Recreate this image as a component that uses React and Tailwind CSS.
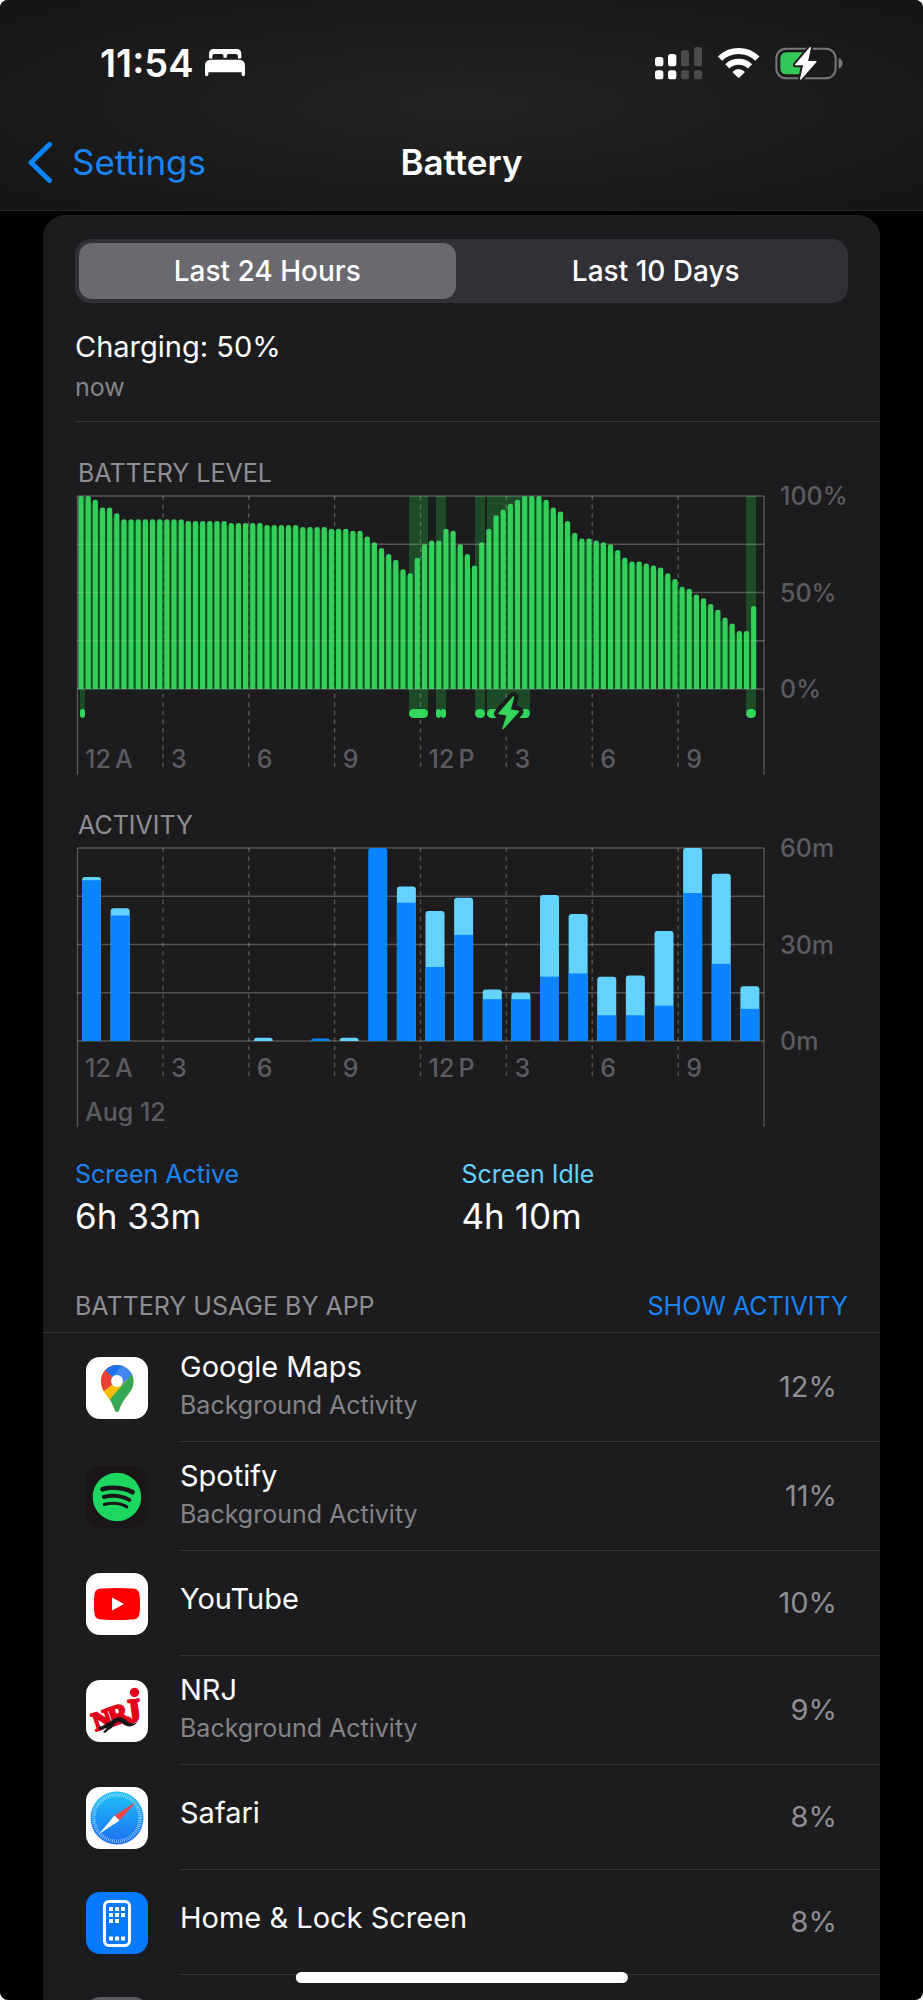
import { useState } from 'react'
import { FaSpotify } from 'react-icons/fa'

const BATTERY = [
  100, 100, 98, 94, 94, 91, 88, 88, 88, 88, 88, 88, 88, 88, 88, 87, 87, 87, 87, 87, 87, 86, 86, 86, 86, 86,
  85, 85, 85, 85, 85, 84, 84, 84, 84, 83, 83, 83, 82, 82, 79, 76, 73, 70, 67, 62, 60, 68, 75, 77, 77, 83,
  82, 75, 70, 64, 76, 83, 90, 93, 96, 98, 100, 100, 100, 98, 94, 92, 87, 81, 78, 78, 77, 76, 75, 72, 68,
  66, 66, 65, 64, 63, 60, 57, 53, 52, 49, 47, 44, 41, 37, 34, 30, 30, 43,
]

// charging periods, in chart units from the left edge: [x, width]
const CHARGING = [[5, 5], [334, 19], [361, 5], [366, 5], [400, 10], [412, 43], [671, 10]]

// minutes per hour: [active, total]
const ACTIVITY = [
  [50, 51], [39, 41.3], [0, 0], [0, 0], [0, 0], [0, 0], [0, 1], [0, 0], [0.8, 0.8], [0, 1], [60, 60], [43, 48],
  [23, 40.4], [33, 44.5], [13, 16], [13, 15], [20, 45.4], [21, 39.5], [8, 20], [8, 20.4], [11, 34.2],
  [46, 60], [24, 52], [10, 17],
]

const HOURS = ['12\u2009A', '3', '6', '9', '12\u2009P', '3', '6', '9']
const PLOT_X = 2
const PLOT_W = 687
const PLOT_H = 193
const TOP = 12
const BOTTOM = TOP + PLOT_H
const STEP = PLOT_W / 8

function GridLines({ dashEnd, solidEnd, opacity }) {
  return (
    <g stroke="#fff" strokeOpacity={opacity} strokeWidth="1.4">
      {[0, 1, 2, 3, 4].map(i => (
        <line key={i} x1={PLOT_X} x2={PLOT_X + PLOT_W} y1={TOP + (PLOT_H / 4) * i} y2={TOP + (PLOT_H / 4) * i}/>
      ))}
      <line x1={PLOT_X + .5} x2={PLOT_X + .5} y1={TOP} y2={solidEnd}/>
      <line x1={PLOT_X + PLOT_W} x2={PLOT_X + PLOT_W} y1={TOP} y2={solidEnd}/>
      {[1, 2, 3, 4, 5, 6, 7].map(i => (
        <line key={i} x1={PLOT_X + STEP * i} x2={PLOT_X + STEP * i} y1={TOP} y2={dashEnd} strokeDasharray="4.3 4.3"/>
      ))}
    </g>
  )
}

function AxisLabels({ labels, hourY }) {
  return (
    <g fill="#5b5b60" fontSize="25" fontWeight="500">
      {HOURS.map((h, i) => <text key={i} x={PLOT_X + STEP * i + 8} y={hourY}>{h}</text>)}
      {labels.map((l, i) => <text key={l} x="705" y={TOP + (PLOT_H / 2) * i + 9}>{l}</text>)}
    </g>
  )
}

function BatteryChart() {
  return (
    <svg viewBox="0 -8 805 300" className="-mt-3 block w-full" role="img" aria-label="Battery level">
      <GridLines dashEnd={287} solidEnd={291} opacity=".16"/>
      {CHARGING.map(([x, w]) => (
        <g key={x}>
          <rect x={x} y={TOP} width={w} height={PLOT_H + 24} fill="#24d14b" fillOpacity=".26"/>
          <rect x={x} y={BOTTOM + 20} width={w} height="9" rx={w > 5 ? 4.5 : 2.4} fill="#32d65b"/>
        </g>
      ))}
      {BATTERY.map((v, i) => {
        const x = 3.4 + i * 7.156
        const y = BOTTOM - (v / 100) * PLOT_H
        const gap = (Math.min(v, BATTERY[i + 1] ?? 0) / 100) * PLOT_H - 3
        return (
          <g key={i}>
            {gap > 0 && <rect x={x + 2} y={BOTTOM - gap} width="7" height={gap} fill="#0b4a1b"/>}
            <path d={`M${x} ${BOTTOM}V${y + 2.4}a2.6 2.4 0 0 1 5.2 0V${BOTTOM}z`} fill="#34ce5b"/>
          </g>
        )
      })}
      <GridLines dashEnd={287} solidEnd={291} opacity=".11"/>
      <AxisLabels labels={['100%', '50%', '0%']} hourY={284}/>
      <path d="M438.5 213l-14.5 16.500 8.500 1.500-4.500 13.500 15.500-17-8.500-1.500z" fill="#34ce5b" stroke="#1c1c1e" strokeWidth="10" strokeLinejoin="round"/>
      <path d="M438.5 213l-14.5 16.500 8.500 1.500-4.500 13.500 15.500-17-8.500-1.500z" fill="#32d65b" stroke="#32d65b" strokeWidth="1.500" strokeLinejoin="round"/>
    </svg>
  )
}

function ActivityChart() {
  const unit = PLOT_H / 60
  return (
    <svg viewBox="0 -8 805 300" className="-mt-3 block w-full" role="img" aria-label="Activity">
      <GridLines dashEnd={244} solidEnd={291} opacity=".24"/>
      <AxisLabels labels={['60m', '30m', '0m']} hourY={241}/>
      <text x={PLOT_X + 8} y="285" fill="#5b5b60" fontSize="25" fontWeight="500">Aug 12</text>
      {ACTIVITY.map(([active, total], i) => {
        if (!total) return null
        const x = 7 + i * (PLOT_W / 24)
        const h = total * unit
        const r = Math.min(3, h)
        return (
          <g key={i}>
            <path d={`M${x} ${BOTTOM}v${r - h}q0 ${-r} 3 ${-r}h13q3 0 3 ${r}V${BOTTOM}z`} fill={active === total ? '#0a84ff' : '#64d2ff'}/>
            {active > 0 && active < total && <rect x={x} y={BOTTOM - active * unit} width="19" height={active * unit} fill="#0a84ff"/>}
          </g>
        )
      })}
    </svg>
  )
}

function StatusIcons() {
  return (
    <svg viewBox="582 134 564 104" className="w-[188px]" role="img" aria-label="Signal, Wi-Fi, battery charging">
      <g fill="#fff">
        <rect x="582" y="167" width="25" height="28" rx="8"/>
        <rect x="621" y="158" width="25" height="37" rx="8"/>
        <rect x="582" y="207" width="25" height="27" rx="8"/>
        <rect x="621" y="207" width="25" height="27" rx="8"/>
      </g>
      <g fill="#4b4b4d">
        <rect x="660" y="147" width="24" height="48" rx="8"/>
        <rect x="699" y="137" width="24" height="58" rx="8"/>
        <rect x="660" y="207" width="24" height="27" rx="8"/>
        <rect x="699" y="207" width="24" height="27" rx="8"/>
      </g>
      <g fill="none" stroke="#fff" strokeWidth="18">
        <path d="M777 172a80 80 0 0 1 112 0"/>
        <path d="M799 195a49 49 0 0 1 68 0"/>
      </g>
      <path d="M814 212q19-18 38 0l-16 16q-3 3-6 0z" fill="#fff"/>
      <rect x="946" y="142" width="178" height="89" rx="29" fill="none" stroke="#77777a" strokeWidth="6"/>
      <path d="M1133 170q12 4 12 16t-12 16z" fill="#77777a"/>
      <path d="M978 153h54v66h-54q-20 0-20-20v-26q0-20 20-20z" fill="#34c759"/>
      <path d="M1048 139l-44 51h25l-10 43 46-52h-26z" fill="#fff" stroke="#1e1e1f" strokeWidth="16" strokeLinejoin="round"/>
      <path d="M1048 139l-44 51h25l-10 43 46-52h-26z" fill="#fff" stroke="#fff" strokeWidth="4" strokeLinejoin="round"/>
    </svg>
  )
}

function BedIcon() {
  return (
    <svg viewBox="615 150 119 81" className="w-10" fill="#fff" aria-hidden="true">
      <path d="M627 178v-14q0-14 14-14h68q14 0 14 14v14h-10v-7q0-6-6-6h-22q-5 0-5 5v6h-10v-6q0-5-5-5h-22q-6 0-6 6v7z"/>
      <path d="M615 226v-26q0-18 18-18h83q18 0 18 18v26q0 5-5 5t-5-5v-7h-99v7q0 5-5 5t-5-5z"/>
    </svg>
  )
}

function MapsIcon() {
  return (
    <svg viewBox="0 0 62 62" className="size-full bg-white" aria-hidden="true">
      <clipPath id="pin"><path d="M31 8c9 0 16.500 7 16.500 16 0 12-9.500 14-14.500 29.500q-2 3-4 0C24 38 15 36 15 24 15 15 22 8 31 8z"/></clipPath>
      <g clipPath="url(#pin)">
        <rect width="62" height="62" fill="#fbbc04"/>
        <path d="M48 12L24 42l6 20h32V12z" fill="#34a853"/>
        <path d="M0 0h31v24L14 37 0 50z" fill="#ea4335"/>
        <path d="M31 24L17 37l7 5 18-20z" fill="#fbbc04"/>
        <path d="M18 12l13 12L42 0H20z" fill="#1a73e8"/>
        <path d="M39 5L26 20l5 4 4 5 13-14z" fill="#4285f4"/>
      </g>
      <circle cx="31" cy="24" r="6" fill="#fff"/>
    </svg>
  )
}

function YouTubeIcon() {
  return (
    <svg viewBox="0 0 62 62" className="size-full bg-white" aria-hidden="true">
      <path d="M8 31c0-13 1-15 8-15.500q15-1 30 0c7 .5 8 2.500 8 15.500s-1 15-8 15.500q-15 1-30 0C9 46 8 44 8 31z" fill="#f00"/>
      <path d="M26 24.500v13L38 31z" fill="#fff"/>
    </svg>
  )
}

function NrjIcon() {
  return (
    <svg viewBox="0 0 62 62" className="size-full bg-white" aria-hidden="true">
      <g fill="#e2001a" stroke="#e2001a" strokeWidth="2.400" fontFamily="Liberation Serif, serif" fontWeight="700">
        <text x="10" y="51" fontSize="26" transform="rotate(-19 10 51)">N</text>
        <text x="26" y="46" fontSize="27" transform="rotate(-19 26 46)">R</text>
        <text x="40" y="43" fontSize="33" transform="rotate(-8 40 43)">J</text>
      </g>
      <circle cx="48.500" cy="12.500" r="5.500" fill="#e2001a" stroke="#fff" strokeWidth="1.500"/>
      <path d="M13 47c5-1 7-4 11-5 5-6 12-6 16-2 4 4 8 5 12 1-3 6-10 7-15 3-4-4-7-2-9 1-1 3-5 4-9 8l-2-1 4-4-8 2z" fill="#151515"/>
    </svg>
  )
}

function SafariIcon() {
  return (
    <svg viewBox="0 0 62 62" className="size-full bg-white" aria-hidden="true">
      <linearGradient id="safari" x2="0" y2="1">
        <stop stopColor="#1fc3f8"/>
        <stop offset="1" stopColor="#1b6df0"/>
      </linearGradient>
      <circle cx="31" cy="31" r="26.500" fill="url(#safari)"/>
      <circle cx="31" cy="31" r="23.200" fill="none" stroke="#fff" strokeOpacity=".65" strokeWidth="3.600" strokeDasharray=".7 1.324"/>
      <path d="M50 15L28.500 28.500l5 5z" fill="#f0424a"/>
      <path d="M13 47l15.500-18.500 5 5z" fill="#fff"/>
    </svg>
  )
}

function HomeIcon() {
  const dots = [[23, 15], [29, 15], [35, 15], [23, 21], [29, 21], [35, 21], [23, 27], [29, 27], [23, 44.500], [29, 44.500], [35, 44.500]]
  return (
    <svg viewBox="0 0 62 62" className="size-full bg-[#067aff]" fill="#fff" aria-hidden="true">
      <rect x="18.500" y="9.500" width="25" height="44" rx="4.500" fill="none" stroke="#fff" strokeWidth="3"/>
      {dots.map(([x, y]) => <rect key={`${x}-${y}`} x={x} y={y} width="4" height="4" rx=".6"/>)}
    </svg>
  )
}

function SpotifyIcon() {
  return (
    <div className="size-full bg-[#1a1516] flex items-center justify-center">
      <FaSpotify className="size-[50px] text-[#1ed760]"/>
    </div>
  )
}

const APPS = [
  { name: 'Google Maps', icon: MapsIcon, usage: '12%', background: true },
  { name: 'Spotify', icon: SpotifyIcon, usage: '11%', background: true },
  { name: 'YouTube', icon: YouTubeIcon, usage: '10%' },
  { name: 'NRJ', icon: NrjIcon, usage: '9%', background: true },
  { name: 'Safari', icon: SafariIcon, usage: '8%' },
  { name: 'Home & Lock Screen', icon: HomeIcon, usage: '8%' },
]

function AppRow({ app }) {
  const Icon = app.icon
  return (
    <li className="flex pl-[43px]">
      <div className="size-[62px] self-center rounded-[14px] overflow-hidden shrink-0"><Icon/></div>
      <div className={`ml-8 flex-1 flex items-center justify-between border-b border-[#343437] pr-[43px] ${app.background ? 'h-[109px]' : 'h-[105px]'}`}>
        <div className={app.background ? 'pb-px' : 'pb-2'}>
          <div className="text-[29px] leading-9">{app.name}</div>
          {app.background && <div className="text-[25px] leading-10 text-[#838388]">Background Activity</div>}
        </div>
        <div className="text-[29px] leading-9 text-[#8e8e93]">{app.usage}</div>
      </div>
    </li>
  )
}

export default function App() {
  const [range, setRange] = useState('Last 24 Hours')

  return (
    <div className="bg-white">
      <div className="relative h-screen overflow-hidden flex flex-col bg-black text-white rounded-lg font-[Inter,sans-serif]">
        <header className="shrink-0 h-[211px] border-b border-[#232325] bg-[radial-gradient(ellipse_at_center,#242426_0%,#1c1c1d_50%,#151515_100%)]">
          <div className="flex items-center justify-between pl-[100px] pr-20 pt-[38px]">
            <div className="flex items-center gap-3">
              <span className="text-[38px] leading-[50px] font-semibold">11:54</span>
              <BedIcon/>
            </div>
            <StatusIcons/>
          </div>
          <div className="grid grid-cols-3 items-center pt-[49px] px-7">
            <a href="#settings" className="flex items-center gap-5 text-[35px] leading-[50px] text-[#1b84f5]">
              <svg viewBox="0 0 24 41" className="w-6" fill="none" stroke="#0a84ff" strokeWidth="5" strokeLinecap="round" strokeLinejoin="round" aria-hidden="true">
                <path d="M21.500 2.500L3 20.500l18.500 18"/>
              </svg>
              Settings
            </a>
            <h1 className="text-center text-[35px] leading-[50px] font-semibold">Battery</h1>
          </div>
        </header>

        <main className="flex-1 min-h-0 overflow-y-auto [scrollbar-width:none] px-[43px] pt-1">
          <div className="bg-[#1c1c1e] rounded-t-[22px] pt-6">
            <div className="mx-8 flex gap-3 rounded-[16px] bg-[#313037] p-1">
              {['Last 24 Hours', 'Last 10 Days'].map(r => (
                <button key={r} type="button" aria-pressed={range === r} onClick={() => setRange(r)}
                  className={`flex-1 h-14 rounded-[13px] text-[28px] font-medium ${range === r ? 'bg-[#6a696f]' : ''}`}>
                  {r}
                </button>
              ))}
            </div>

            <section className="ml-8 border-b border-[#39393c] pt-6 pb-[14px]">
              <p className="text-[29px] leading-10">Charging: 50%</p>
              <p className="text-[25px] leading-10 text-[#838388]">now</p>
            </section>

            <section className="pl-8 pt-9">
              <h2 className="pl-[3px] text-[25px] leading-[30px] text-[#8e8e93]">BATTERY LEVEL</h2>
              <BatteryChart/>
            </section>

            <section className="pl-8 pt-[34px]">
              <h2 className="pl-[3px] text-[25px] leading-[30px] text-[#8e8e93]">ACTIVITY</h2>
              <ActivityChart/>
            </section>

            <section className="mx-8 pt-7 grid grid-cols-2">
              <div>
                <p className="text-[25px] leading-9 text-[#1b84f5]">Screen Active</p>
                <p className="text-[35px] leading-[48px]">6h 33m</p>
              </div>
              <div>
                <p className="text-[25px] leading-9 text-[#64d2ff]">Screen Idle</p>
                <p className="text-[35px] leading-[48px]">4h 10m</p>
              </div>
            </section>

            <section className="pt-12">
              <div className="flex justify-between px-8 pb-2 border-b border-[#343437] text-[25px] leading-9">
                <h2 className="text-[#8e8e93]">BATTERY USAGE BY APP</h2>
                <button type="button" className="text-[#1b84f5]">SHOW ACTIVITY</button>
              </div>
              <ul>
                {APPS.map(app => <AppRow key={app.name} app={app}/>)}
                <li className="h-[105px] flex items-center pl-[43px]">
                  <div className="size-[62px] rounded-[14px] bg-[#5a5a62]"/>
                </li>
              </ul>
            </section>
          </div>
        </main>

        <div className="absolute bottom-[17px] left-1/2 -translate-x-1/2 w-[36%] h-[11px] rounded-full bg-white"/>
      </div>
    </div>
  )
}
